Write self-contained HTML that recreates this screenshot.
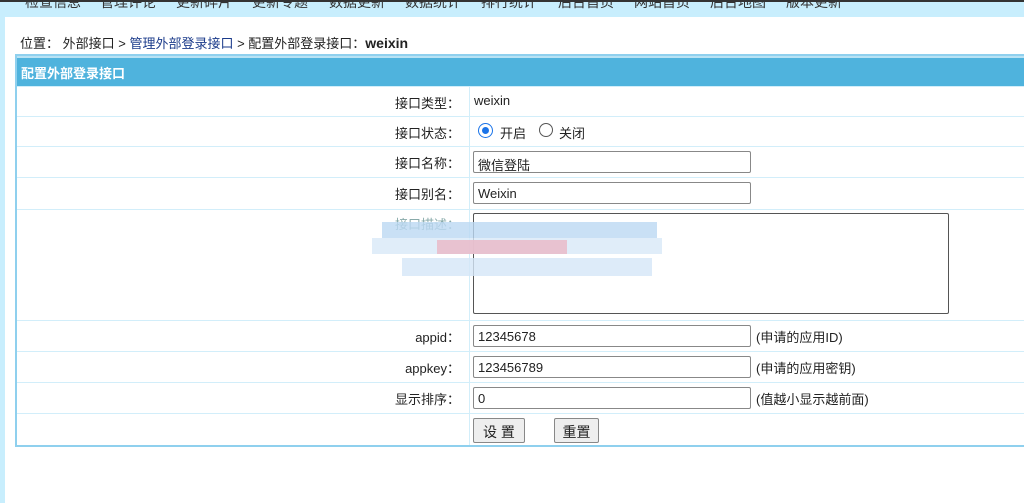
<!DOCTYPE html>
<html><head><meta charset="utf-8"><style>
*{margin:0;padding:0;box-sizing:border-box}
body{width:1024px;height:503px;overflow:hidden;background:#fff;font-family:"Liberation Sans","Noto Sans CJK SC",sans-serif;font-size:13px;color:#222;position:relative}
.top{position:absolute;left:0;top:0;width:1024px;height:17px;background:#c8eefd;border-top:2px solid #333;overflow:hidden}
.top span{position:absolute;top:-10px;font-size:14px;color:#333}
.lstrip{position:absolute;left:0;top:17px;width:5px;height:486px;background:#c8eefd}
.crumb{position:absolute;left:20px;top:33px;font-size:13px;color:#222}
.crumb a{color:#1a3a8a;text-decoration:none}
.tbl{position:absolute;left:15px;top:54px;width:1020px;height:393px;border:2px solid #8fd0ee;border-right:none}
.hdr{position:absolute;left:0;top:0;right:0;height:30px;background:#4fb3dd;border-top:2px solid #b8e2f4;color:#fff;font-weight:bold;font-size:13px;padding:5px 0 0 4px}
.row{position:absolute;left:0;right:0;border-top:1px solid #d2eefa}
.lab{position:absolute;right:calc(100% - 443px);top:0;text-align:right;white-space:nowrap}
.vl{position:absolute;left:452px;top:30px;bottom:0;width:1px;background:#d2eefa}
.inp{position:absolute;left:456px;width:278px;height:22px;border:1px solid #888;border-radius:2px;background:#fff;padding:3px 4px;font-size:13px}
.note{position:absolute;left:739px;white-space:nowrap}
.btn{position:absolute;height:25px;border:1px solid #888;border-radius:2px;background:#eee;font-size:14px;text-align:center;padding-top:3px}
.blur{position:absolute}
</style></head><body>
<div class="top">
<span style="left:-4px">·</span>
<span style="left:25px">检查信息</span><span style="left:100px">管理评论</span><span style="left:176px">更新碎片</span><span style="left:252px">更新专题</span><span style="left:329px">数据更新</span><span style="left:405px">数据统计</span><span style="left:481px">排行统计</span><span style="left:558px">后台首页</span><span style="left:634px">网站首页</span><span style="left:710px">后台地图</span><span style="left:786px">版本更新</span>
</div>
<div class="lstrip"></div>
<div class="crumb">位置： 外部接口 &gt; <a>管理外部登录接口</a> &gt; 配置外部登录接口：<b style="font-size:14px">weixin</b></div>
<div class="tbl">
<div class="hdr">配置外部登录接口</div>
<div class="vl"></div>
<div class="row" style="top:30px;height:30px"><div class="lab" style="top:6px">接口类型：</div><div style="position:absolute;left:457px;top:6px">weixin</div></div>
<div class="row" style="top:60px;height:30px"><div class="lab" style="top:6px">接口状态：</div>
<div style="position:absolute;left:461px;top:6px;width:15px;height:15px;border:1px solid #1a73e8;border-radius:50%"><div style="margin:3px;width:7px;height:7px;border-radius:50%;background:#1a73e8"></div></div><div style="position:absolute;left:483px;top:6px">开启</div>
<div style="position:absolute;left:522px;top:6px;width:14px;height:14px;border:1px solid #555;border-radius:50%"></div><div style="position:absolute;left:542px;top:6px">关闭</div></div>
<div class="row" style="top:90px;height:31px"><div class="lab" style="top:6px">接口名称：</div><div class="inp" style="top:4px">微信登陆</div></div>
<div class="row" style="top:121px;height:32px"><div class="lab" style="top:6px">接口别名：</div><div class="inp" style="top:4px">Weixin</div></div>
<div class="row" style="top:153px;height:111px"><div class="lab" style="top:4px;color:#8aa">接口描述：</div><div class="inp" style="top:3px;width:476px;height:101px;border-color:#555"></div>
<div class="blur" style="left:365px;top:12px;width:275px;height:16px;background:#bcd8f2;opacity:.8"></div>
<div class="blur" style="left:355px;top:28px;width:290px;height:16px;background:#d8e8f8;opacity:.8"></div>
<div class="blur" style="left:420px;top:30px;width:130px;height:14px;background:#e9bccb;opacity:.9"></div>
<div class="blur" style="left:385px;top:48px;width:250px;height:18px;background:#d4e6f8;opacity:.8"></div>
</div>
<div class="row" style="top:264px;height:31px"><div class="lab" style="top:6px">appid：</div><div class="inp" style="top:4px">12345678</div><div class="note" style="top:6px">(申请的应用ID)</div></div>
<div class="row" style="top:295px;height:31px"><div class="lab" style="top:6px">appkey：</div><div class="inp" style="top:4px">123456789</div><div class="note" style="top:6px">(申请的应用密钥)</div></div>
<div class="row" style="top:326px;height:31px"><div class="lab" style="top:6px">显示排序：</div><div class="inp" style="top:4px">0</div><div class="note" style="top:6px">(值越小显示越前面)</div></div>
<div class="row" style="top:357px;height:33px"><div class="btn" style="left:456px;top:4px;width:52px">设 置</div><div class="btn" style="left:537px;top:4px;width:45px">重置</div></div>
</div>
</body></html>
